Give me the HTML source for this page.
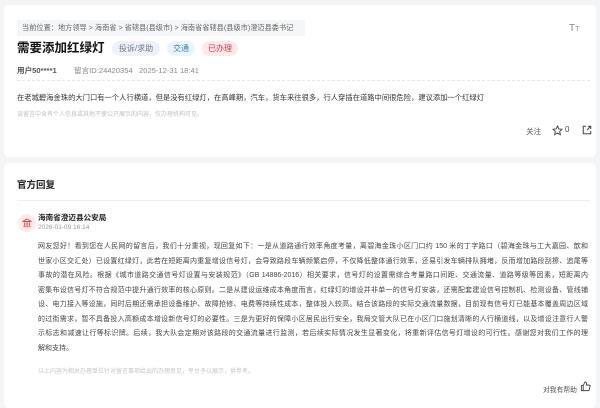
<!DOCTYPE html>
<html><head><meta charset="utf-8"><style>
*{margin:0;padding:0;box-sizing:border-box}
body{width:600px;height:401px;background:#f4f5f7;font-family:"Liberation Sans","Noto Sans CJK SC",sans-serif;position:relative;overflow:hidden;color:#333}
.card{position:absolute;left:4px;right:4px;background:#fff;border-radius:4px}
.a{position:absolute;white-space:nowrap}
.tag{position:absolute;top:41px;height:15px;border-radius:8px;font-size:8px;line-height:15px;text-align:center}
.ln{position:absolute;left:38px;width:550px;font-size:7px;text-align:justify;text-align-last:justify;white-space:nowrap;color:#444;height:12px;line-height:12px;overflow:hidden}
</style></head><body>
<div class="card" style="top:5px;height:152px"></div>
<div class="a" style="left:17px;top:20px;width:288px;height:16px;background:#f5f6f8;font-size:7.2px;line-height:16px;color:#666;padding-left:5px">当前位置：地方领导 &gt; 海南省 &gt; 省辖县(县级市) &gt; 海南省省辖县(县级市)澄迈县委书记</div>
<div class="a" style="left:569px;top:23px;font-size:10px;color:#888">T<span style="font-size:7px">T</span></div>
<div class="a" style="left:17px;top:40px;font-size:12.5px;font-weight:bold;color:#111;line-height:16px">需要添加红绿灯</div>
<div class="tag" style="left:112px;width:48px;background:#eef1f6;color:#6a7890">投诉/求助</div>
<div class="tag" style="left:167px;width:28px;background:#eaf5fa;color:#3a7fb8">交通</div>
<div class="tag" style="left:202px;width:36px;background:#fde8ea;color:#d8394a">已办理</div>
<div class="a" style="left:17px;top:65px;font-size:7.6px;color:#555;font-weight:bold">用户50****1</div>
<div class="a" style="left:74px;top:65px;font-size:7.6px;color:#888">留言ID:24420354&nbsp;&nbsp;&nbsp;2025-12-31 18:41</div>
<div class="a" style="left:17px;top:80px;width:573px;border-top:1px dashed #e6e6e6"></div>
<div class="a" style="left:17px;top:93px;font-size:7.3px;color:#333">在老城碧海金珠的大门口有一个人行横道，但是没有红绿灯，在高峰期，汽车，货车来往很多，行人穿插在道路中间很危险，建议添加一个红绿灯</div>
<div class="a" style="left:17px;top:109px;font-size:6px;color:#c0c0c0">该留言中含有个人信息或其他不便公开展示的内容，仅办理机构可见。</div>
<div class="a" style="left:526px;top:126px;font-size:7.6px;color:#555">关注</div>
<svg class="a" style="left:552px;top:125px" width="11" height="11" viewBox="0 0 24 24"><path d="M12 2l3 6.5 7 .8-5.2 4.8 1.5 7L12 17.5 5.7 21l1.5-7L2 9.3l7-.8z" fill="none" stroke="#444" stroke-width="2"/></svg>
<div class="a" style="left:565px;top:125px;font-size:8px;color:#444">0</div>
<svg class="a" style="left:582px;top:125px" width="10" height="10" viewBox="0 0 24 24"><path d="M10 3H3v18h18v-7M14 3h7v7M21 3l-9 9" fill="none" stroke="#444" stroke-width="2.4"/></svg>

<div class="card" style="top:163px;height:245px"></div>
<div class="a" style="left:17px;top:177px;font-size:9.5px;font-weight:bold;color:#222">官方回复</div>
<div class="a" style="left:17px;top:200px;width:573px;border-top:1px solid #eee"></div>
<div class="a" style="left:18px;top:214px;width:18px;height:18px;border-radius:50%;background:#fdeaea"></div>
<svg class="a" style="left:22px;top:218px" width="10" height="10" viewBox="0 0 24 24"><path d="M2 8L12 2l10 6zM4 9h16M6 11v8M10 11v8M14 11v8M18 11v8M3 21h18" fill="none" stroke="#d84a4a" stroke-width="2"/></svg>
<div class="a" style="left:38px;top:212px;font-size:7.6px;font-weight:bold;color:#222">海南省澄迈县公安局</div>
<div class="a" style="left:38px;top:224px;font-size:6.5px;color:#999">2026-01-09 16:14</div>
<div class="ln" style="top:241px">网友您好！看到您在人民网的留言后，我们十分重视，现回复如下：一是从道路通行效率角度考量，离碧海金珠小区门口约 150 米的丁字路口（碧海金珠与工大嘉园、歆和</div>
<div class="ln" style="top:255.5px">世家小区交汇处）已设置红绿灯，此若在短距离内重复增设信号灯，会导致路段车辆频繁启停，不仅降低整体通行效率，还易引发车辆排队拥堵，反而增加路段刮擦、追尾等</div>
<div class="ln" style="top:270px">事故的潜在风险。根据《城市道路交通信号灯设置与安装规范》（GB 14886-2016）相关要求，信号灯的设置需综合考量路口间距、交通流量、道路等级等因素，短距离内</div>
<div class="ln" style="top:284.5px">密集布设信号灯不符合规范中提升通行效率的核心原则。二是从建设运维成本角度而言，红绿灯的增设并非单一的信号灯安装，还需配套建设信号控制机、检测设备、管线铺</div>
<div class="ln" style="top:299px">设、电力接入等设施，同时后期还需承担设备维护、故障抢修、电费等持续性成本，整体投入较高。结合该路段的实际交通流量数据，目前现有信号灯已能基本覆盖周边区域</div>
<div class="ln" style="top:313.5px">的过街需求，暂不具备投入高额成本增设新信号灯的必要性。三是为更好的保障小区居民出行安全，我局交管大队已在小区门口施划清晰的人行横道线，以及增设注意行人警</div>
<div class="ln" style="top:328px">示标志和减速让行等标识牌。后续，我大队会定期对该路段的交通流量进行监测，若后续实际情况发生显著变化，将重新评估信号灯增设的可行性。感谢您对我们工作的理</div>
<div class="ln" style="top:342.5px;width:auto;text-align-last:auto">解和支持。</div>
<div class="a" style="left:38px;top:366px;font-size:6px;color:#c4c4c4">以上内容为相关办理单位针对留言事项给出的办理意见，平台予以展示，供参考。</div>
<div class="a" style="left:543px;top:384px;font-size:6.8px;color:#555">对我有帮助</div>
<svg class="a" style="left:580px;top:381px" width="11" height="11" viewBox="0 0 24 24"><path d="M3 10h4v11H3zM7 10l4-8c2 0 3 1 3 3v4h6c1 0 2 1 2 2l-2 8c0 1-1 2-2 2H7" fill="none" stroke="#444" stroke-width="2"/></svg>
</body></html>
